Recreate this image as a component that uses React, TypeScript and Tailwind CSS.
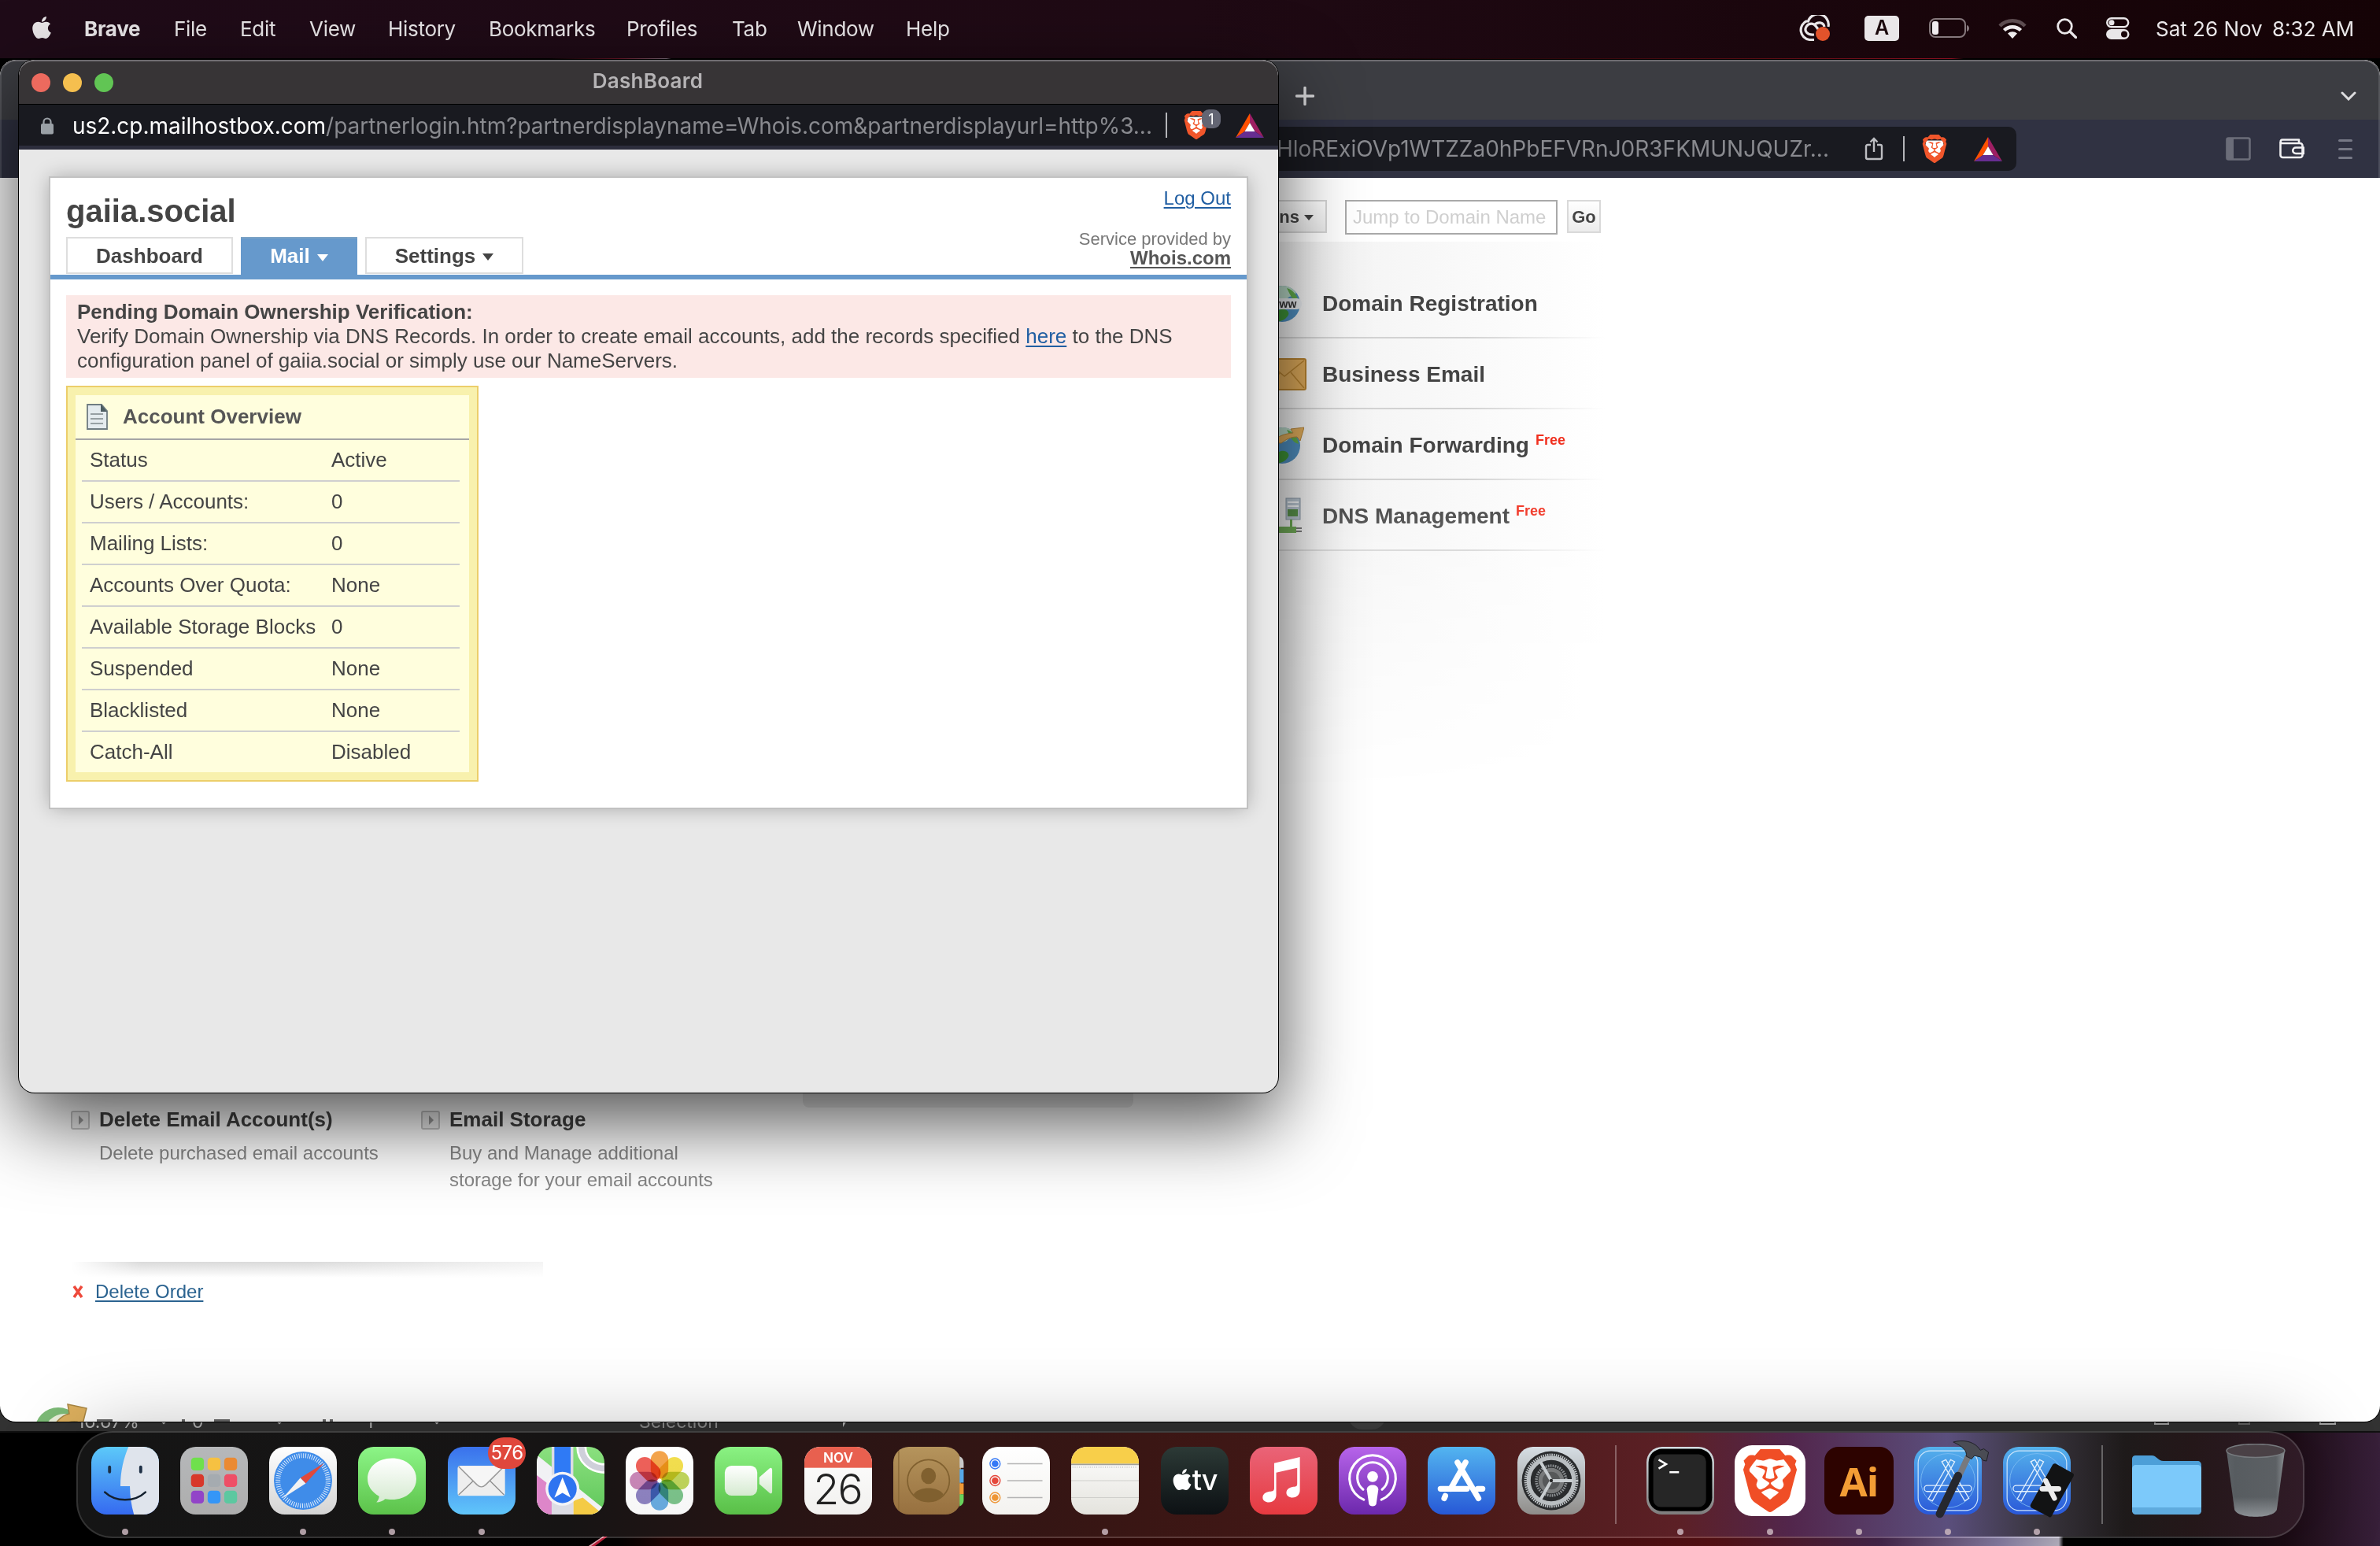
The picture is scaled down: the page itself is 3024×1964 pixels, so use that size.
import React from "react";
import { FaApple } from "react-icons/fa";
import { SiBrave } from "react-icons/si";

type Kids = { children?: React.ReactNode };

/* ---------- shared glyphs ---------- */

function BraveLion({ className }: { className: string }) {
  return (
    <span className={`relative flex shrink-0 items-center justify-center ${className}`}>
      <svg viewBox="0 0 24 24" className="absolute h-full w-full">
        <path d="M5 5h14l1 5-3 8-5 4-5-4-3-8z" fill="#fff" />
      </svg>
      <SiBrave className="relative h-full w-full text-[#f1562b]" />
    </span>
  );
}

function BatTriangle() {
  return (
    <svg viewBox="0 0 36 31" className="h-[31px] w-[36px] shrink-0">
      <path d="M18 0 0 31l11.500-8L18 12z" fill="#ff5000" />
      <path d="M18 0v12l6.500 11L36 31z" fill="#9e1f63" />
      <path d="M0 31h36l-11.500-8h-13z" fill="#662d91" />
      <path d="M18 12 11.500 23h13z" fill="#fff" />
    </svg>
  );
}

/* ---------- menu bar ---------- */

const menus = [
  { label: "File", w: "w-[84px]" },
  { label: "Edit", w: "w-[88px]" },
  { label: "View", w: "w-[100px]" },
  { label: "History", w: "w-[128px]" },
  { label: "Bookmarks", w: "w-[175px]" },
  { label: "Profiles", w: "w-[134px]" },
  { label: "Tab", w: "w-[83px]" },
  { label: "Window", w: "w-[138px]" },
  { label: "Help", w: "w-[60px]" },
];

function MenuBar() {
  return (
    <header className="flex h-[74px] w-full items-center bg-linear-to-r from-[#1f0b18] via-[#1f0a14] to-[#150306] pb-[2px] text-[26px] text-[#e9e6e8]">
      <FaApple className="ml-[39px] h-[32px] w-[28px] shrink-0 -translate-y-px" />
      <span className="ml-[40px] w-[114px] font-bold tracking-[-0.3px]">Brave</span>
      {menus.map((m) => (
        <span key={m.label} className={`${m.w} shrink-0 whitespace-nowrap tracking-[-0.3px]`}>
          {m.label}
        </span>
      ))}
      <div className="ml-auto flex items-center pr-[34px]">
        <svg viewBox="0 0 42 34" className="h-[34px] w-[42px]">
          <g fill="none" stroke="#e9e6e8" strokeWidth="3.200">
            <path d="M20 31.500H14A12.500 12.500 0 0 1 11 7.500 M12 9.500A12.500 12.500 0 0 1 38 15" />
            <path d="M20 25c-9 1-13-5-10-10s9-5 12-1l6 8" />
            <path d="M20 13c4-5 12-4 13 2" />
          </g>
          <circle cx="31" cy="24" r="9" fill="#e2532b" />
        </svg>
        <span className="ml-[42px] flex h-[32px] w-[44px] items-center justify-center rounded-[5px] bg-[#e9e6e8] text-[25px] font-semibold text-[#1a070b]">
          A
        </span>
        <svg viewBox="0 0 52 26" className="ml-[38px] h-[26px] w-[52px]">
          <rect x="1" y="1" width="45" height="23" rx="7" fill="none" stroke="#85787c" strokeWidth="2" />
          <rect x="4" y="4" width="8" height="17" rx="3" fill="#efecee" />
          <path d="M48 9c4 1 4 7 0 8z" fill="#85787c" />
        </svg>
        <svg viewBox="0 0 36 26" className="ml-[36px] h-[26px] w-[36px]">
          <g fill="none" strokeWidth="4.500">
            <path d="M2 10A22.500 22.500 0 0 1 34 10" stroke="#5c4c50" />
            <path d="M7.500 15.500a15 15 0 0 1 21 0" stroke="#efecee" />
          </g>
          <path d="M18 26l-6-6.500a9 9 0 0 1 12 0z" fill="#efecee" />
        </svg>
        <svg viewBox="0 0 26 26" className="ml-[38px] h-[26px] w-[26px]">
          <circle cx="10.500" cy="10.500" r="8.800" fill="none" stroke="#e9e6e8" strokeWidth="2.800" />
          <path d="M17 17l7.500 7.500" stroke="#e9e6e8" strokeWidth="3.200" strokeLinecap="round" />
        </svg>
        <svg viewBox="0 0 30 28" className="ml-[37px] h-[28px] w-[30px]">
          <rect x="1.200" y="1.200" width="27" height="11" rx="5.500" fill="none" stroke="#e9e6e8" strokeWidth="2.400" />
          <circle cx="7" cy="6.700" r="3.500" fill="#e9e6e8" />
          <rect x="0" y="15" width="29.500" height="13" rx="6.500" fill="#e9e6e8" />
          <circle cx="23" cy="21.500" r="4" fill="#1a070b" />
        </svg>
        <span className="ml-[33px] w-[148px] whitespace-nowrap">Sat 26 Nov</span>
        <span className="w-[103px] whitespace-nowrap">8:32 AM</span>
      </div>
    </header>
  );
}

/* ---------- main browser window ---------- */

function GlobeIcon({ arrow }: { arrow?: boolean }) {
  return (
    <svg viewBox="0 0 52 48" className="h-[48px] w-[52px]">
      <circle cx="24" cy="24" r="23" fill="#4f8fc0" />
      <path d="M6 10C16-2 34-2 42 10c-6 6-8 3-12 8-8 4-16 0-24-8z" fill="#b9d9c8" />
      <path d="M30 4c8 2 14 10 15 18-8-2-10-8-15-18z" fill="#62ad4c" />
      <path d="M20 32c8-4 14 2 12 6s-8 9-14 8-6-10 2-14z" fill="#3f9638" />
      {arrow ? (
        <path d="M10 20C20 11 28 9 38 8l-3-5 17-2-5 17-4-5c-8 0-14 3-20 8z" fill="#e0ad5c" stroke="#b78639" />
      ) : (
        <>
          <rect x="0" y="17" width="49" height="14" rx="6" fill="#e9ecef" />
          <text x="26" y="28.500" textAnchor="middle" fontSize="14" fontWeight="700" fill="#333">
            www
          </text>
        </>
      )}
    </svg>
  );
}

function EnvelopeIcon() {
  return (
    <svg viewBox="0 0 56 42" className="h-[42px] w-[56px]">
      <rect x="1" y="1" width="53" height="39" rx="2" fill="#dca95a" stroke="#b5812f" strokeWidth="2" />
      <path d="M3 3l24 20L52 3M3 38l18-19M52 38L35 18" fill="none" stroke="#b5812f" strokeWidth="1.500" />
    </svg>
  );
}

function ServerIcon() {
  return (
    <svg viewBox="0 0 50 48" className="h-[48px] w-[50px]">
      <rect x="29" y="1" width="18" height="27" fill="#b7c4d0" stroke="#8595a3" />
      <path d="M31 6h14M31 11h14" stroke="#f3f6f8" strokeWidth="2" />
      <rect x="31" y="15" width="13" height="9" fill="#4d8b3e" />
      <path d="M34 28v9H20v8h22v-8h-5v-9z" fill="#5da23f" />
      <path d="M42 39h7M42 43h7" stroke="#666" strokeWidth="2" />
    </svg>
  );
}

const services = [
  { label: "Domain Registration", free: false, icon: <GlobeIcon /> },
  { label: "Business Email", free: false, icon: <EnvelopeIcon /> },
  { label: "Domain Forwarding", free: true, icon: <GlobeIcon arrow /> },
  { label: "DNS Management", free: true, icon: <ServerIcon /> },
];

function BulletBox() {
  return (
    <svg viewBox="0 0 24 24" className="mt-[5px] h-[24px] w-[24px] shrink-0">
      <rect x="1" y="1" width="22" height="22" rx="2" fill="#eee" stroke="#c4c4c4" strokeWidth="2" />
      <path d="M10 6l6 6-6 6z" fill="#999" />
    </svg>
  );
}

function Feature({ title, lines }: { title: string; lines: string[] }) {
  return (
    <div className="flex h-[110px] w-[445px] gap-[12px]">
      <BulletBox />
      <div className="whitespace-nowrap">
        <h3 className="text-[26px] leading-[32px] font-bold text-[#404040]">{title}</h3>
        <div className="mt-[10px] text-[24px] leading-[34px] text-[#868686]">
          {lines.map((l) => (
            <p key={l}>{l}</p>
          ))}
        </div>
      </div>
    </div>
  );
}

function BrowserWindow() {
  return (
    <section className="absolute top-[76px] left-0 flex h-[1730px] w-[3024px] flex-col overflow-hidden rounded-[20px] bg-white shadow-[0_0_0_1px_#000]">
      <div className="flex h-[76px] shrink-0 items-center justify-between rounded-t-[20px] border-x-2 border-t-2 border-x-[#55565b] border-t-[#6d6b70] bg-[#3c3d42] pr-[28px] pl-[1644px]">
        <svg viewBox="0 0 24 24" className="h-[24px] w-[24px] translate-y-[7px]">
          <path d="M12 1.500v21M1.500 12h21" stroke="#d6d6d8" strokeWidth="3.400" strokeLinecap="round" />
        </svg>
        <svg viewBox="0 0 20 12" className="h-[12px] w-[20px] translate-y-[7px]">
          <path d="M2 2l8 8 8-8" fill="none" stroke="#dcdcde" strokeWidth="3" strokeLinecap="round" />
        </svg>
      </div>
      <div className="flex h-[74px] shrink-0 items-center border-x-2 border-[#4c4e5c] bg-[#303242]">
        <div className="ml-[198px] flex h-[56px] w-[2362px] items-center justify-end rounded-[10px] bg-[#191a20] pr-[18px]">
          <span className="mr-[45px] text-[28px] whitespace-nowrap text-[#898a8f]">
            HloRExiOVp1WTZZa0hPbEFVRnJ0R3FKMUNJQUZr...
          </span>
          <svg viewBox="0 0 24 30" className="h-[30px] w-[24px]">
            <path d="M8 10H4a2 2 0 0 0-2 2v14a2 2 0 0 0 2 2h16a2 2 0 0 0 2-2V12a2 2 0 0 0-2-2h-4M12 19V2M7.500 6.500 12 2l4.500 4.500" fill="none" stroke="#bdbec2" strokeWidth="2.400" />
          </svg>
          <span className="mr-[20px] ml-[25px] h-[32px] w-[2px] bg-[#b4b5b9]" />
          <BraveLion className="h-[36px] w-[36px]" />
          <span className="w-[32px]" />
          <BatTriangle />
        </div>
        <div className="ml-auto flex items-center pr-[33px]">
          <svg viewBox="0 0 32 30" className="h-[30px] w-[32px]">
            <rect x="1.500" y="1.500" width="29" height="27" rx="2" fill="none" stroke="#6b6d79" strokeWidth="2.600" />
            <rect x="1" y="2" width="9" height="27" fill="#6b6d79" />
          </svg>
          <svg viewBox="0 0 32 26" className="ml-[36px] h-[26px] w-[32px]">
            <g fill="none" stroke="#f0f0f2" strokeWidth="2.600" strokeLinejoin="round">
              <path d="M1.500 4v17a3 3 0 0 0 3 3h22a3 3 0 0 0 3-3V9a3 3 0 0 0-3-3H4a2.200 2.200 0 0 1 0-4.500h21V6" />
              <path d="M31 11.500H21a3.500 3.500 0 0 0 0 7.500h10z" />
            </g>
          </svg>
          <div className="ml-[43px] flex w-[18px] flex-col gap-[8px]">
            <span className="h-[3px] rounded bg-[#777986]" />
            <span className="h-[3px] rounded bg-[#777986]" />
            <span className="h-[3px] rounded bg-[#777986]" />
          </div>
        </div>
      </div>
      <div className="flex flex-1 overflow-hidden font-[Liberation_Sans,Arial,sans-serif]">
        <div className="w-[1600px] shrink-0 pt-[1180px] pl-[90px]">
          <div className="flex">
            <Feature title="Delete Email Account(s)" lines={["Delete purchased email accounts"]} />
            <Feature title="Email Storage" lines={["Buy and Manage additional", "storage for your email accounts"]} />
            <div className="-mt-[80px] ml-[40px] h-[81px] w-[420px] rounded-b-[8px] bg-[#ececec]" />
          </div>
          <div className="mt-[87px] h-[20px] w-[600px] bg-linear-to-b from-[#dadada] to-white mask-l-from-85%">
            <div className="h-full w-full bg-linear-to-r from-white/0 from-50% to-white/70" />
          </div>
          <div className="mt-[4px] flex items-center text-[24px] leading-[28px]">
            <svg viewBox="0 0 14 16" className="mr-[15px] ml-[2px] h-[16px] w-[14px]">
              <path d="M2 1l10 14M12 1 2 15" stroke="#ee4a3c" strokeWidth="3.600" />
            </svg>
            <a className="text-[#2b6390] underline decoration-2 underline-offset-[3px]">Delete Order</a>
          </div>
          <div className="mt-[127px] -ml-[48px] flex">
            <svg viewBox="0 0 70 60" className="h-[60px] w-[70px] shrink-0">
              <circle cx="32" cy="36" r="30" fill="#7cba76" />
              <circle cx="40" cy="40" r="26" fill="#e9efdb" />
              <path d="M22 40C26 26 36 16 46 14l-2-12 24 5-6 24-6-7c-14-2-24 8-28 20z" fill="#ddb05e" stroke="#a98642" strokeWidth="1.500" />
            </svg>
            <div className="mt-[21px] ml-[11px] flex h-[3px] opacity-80">
              <span className="h-[3px] w-[20px] bg-[#444]" />
              <span className="ml-[88px] h-[3px] w-[4px] bg-[#444]" />
              <span className="ml-[37px] h-[3px] w-[20px] bg-[#444]" />
              <span className="ml-[118px] h-[3px] w-[4px] bg-[#444]" />
              <span className="ml-[5px] h-[3px] w-[4px] bg-[#444]" />
            </div>
          </div>
        </div>
        <div className="w-[440px] pt-[28px]">
          <div className="flex h-[44px] items-start">
            <div className="flex h-[42px] w-[86px] shrink-0 items-center justify-end border-2 border-[#d4d4d4] bg-linear-to-b from-white to-[#ececec] pt-px pr-[15px] text-[22px] font-bold text-[#444]">
              ons
              <svg viewBox="0 0 12 7" className="ml-[6px] h-[7px] w-[12px] translate-y-px">
                <path d="M0 0h12L6 7z" fill="#444" />
              </svg>
            </div>
            <div className="ml-[23px] flex h-[44px] w-[270px] shrink-0 items-center border-2 border-[#a9a9a9] bg-white pl-[8px] text-[24px] whitespace-nowrap text-[#cfcfcf]">
              Jump to Domain Name
            </div>
            <div className="ml-[12px] flex h-[42px] w-[43px] shrink-0 items-center justify-center border-2 border-[#d9d9d9] bg-linear-to-b from-white to-[#ececec] pt-px text-[22px] font-bold text-[#444]">
              Go
            </div>
          </div>
          <div className="mt-[9px] h-[703px] bg-linear-to-r from-[#f1f1f1] to-white pt-[33px] mask-b-from-45%">
            {services.map((s) => (
              <div key={s.label} className="relative flex h-[90px] items-center pt-[2px] pl-[5px]">
                <div className="flex w-[75px] shrink-0">{s.icon}</div>
                <span className="text-[28px] font-bold whitespace-nowrap text-[#444]">{s.label}</span>
                {s.free && (
                  <span className="mb-[13px] ml-[8px] text-[18px] font-bold text-[#f0301f]">Free</span>
                )}
                <div className="absolute bottom-0 left-0 h-[2px] w-full bg-linear-to-r from-[#d2d2d2] from-60% to-white" />
              </div>
            ))}
          </div>
        </div>
      </div>
    </section>
  );
}

/* ---------- popup window ---------- */

const overview = [
  ["Status", "Active"],
  ["Users / Accounts:", "0"],
  ["Mailing Lists:", "0"],
  ["Accounts Over Quota:", "None"],
  ["Available Storage Blocks", "0"],
  ["Suspended", "None"],
  ["Blacklisted", "None"],
  ["Catch-All", "Disabled"],
];

function Caret({ className }: { className: string }) {
  return (
    <svg viewBox="0 0 14 9" className={`mt-[3px] ml-[9px] h-[9px] w-[14px] ${className}`}>
      <path d="M0 0h14L7 9z" fill="currentColor" />
    </svg>
  );
}

function PopupWindow() {
  return (
    <section className="absolute top-[76px] left-[24px] flex h-[1312px] w-[1600px] flex-col overflow-hidden rounded-[20px] bg-[#e8e8e8] shadow-[0_0_0_1px_#000,0_36px_100px_rgba(0,0,0,0.7)]">
      <div className="relative flex h-[57px] shrink-0 items-center justify-center rounded-t-[20px] border-t-2 border-b border-t-[#6f6c70] border-b-black bg-[#373436]">
        <div className="absolute left-[16px] flex gap-[16px]">
          <span className="h-[24px] w-[24px] rounded-full bg-[#ed6a5e]" />
          <span className="h-[24px] w-[24px] rounded-full bg-[#f5bf4f]" />
          <span className="h-[24px] w-[24px] rounded-full bg-[#61c554]" />
        </div>
        <span className="pr-[2px] pb-[5px] text-[26px] font-semibold tracking-[0.25px] text-[#b5b3b5]">DashBoard</span>
      </div>
      <div className="flex h-[57px] shrink-0 items-center border-b-[5px] border-[#2c2d3c] bg-[#191a20] pl-[28px]">
        <svg viewBox="0 0 16 22" className="h-[22px] w-[16px] shrink-0 translate-y-px">
          <path d="M3.500 9V6a4.500 4.500 0 0 1 9 0v3" fill="none" stroke="#9aa0a6" strokeWidth="2.200" />
          <rect x="0" y="8" width="16" height="13.500" rx="2" fill="#9aa0a6" />
        </svg>
        <span className="ml-[24px] pt-[2px] text-[28px] tracking-[-0.03px] whitespace-nowrap text-[#898a8f]">
          <span className="text-white">us2.cp.mailhostbox.com</span>
          /partnerlogin.htm?partnerdisplayname=Whois.com&amp;partnerdisplayurl=http%3...
        </span>
        <div className="ml-auto flex items-center pr-[18px]">
          <span className="mr-[19px] h-[32px] w-[2px] bg-[#b4b5b9]" />
          <div className="relative mr-[32px]">
            <BraveLion className="h-[36px] w-[36px]" />
            <span className="absolute -top-[2px] left-[25px] flex h-[24px] w-[24px] items-center justify-center rounded-[9px] bg-[#636573] text-[18px] text-white">
              1
            </span>
          </div>
          <BatTriangle />
        </div>
      </div>
      <div className="px-[40px] pt-[36px] font-[Liberation_Sans,Arial,sans-serif] text-[26px] text-[#444]">
        <div className="h-[800px] bg-white shadow-[0_0_0_2px_#c2c2c2,0_0_24px_rgba(0,0,0,0.3)]">
          <div className="flex h-[129px] justify-between border-b-[6px] border-[#6699cc] pr-[20px] pl-[20px]">
            <div className="pt-[18px]">
              <h1 className="text-[40px] leading-[48px] font-bold">gaiia.social</h1>
              <nav className="mt-[9px] flex h-[48px] gap-[10px] font-bold">
                <span className="flex h-[47px] w-[212px] items-center justify-center border-2 border-[#dedede] pt-[1px]">
                  Dashboard
                </span>
                <span className="flex h-[48px] w-[148px] items-center justify-center border-t-2 border-[#7ba3c6] bg-[#6699cc] pb-px text-white">
                  Mail
                  <Caret className="text-white" />
                </span>
                <span className="flex h-[47px] w-[201px] items-center justify-center border-2 border-[#dedede] pt-[1px]">
                  Settings
                  <Caret className="text-[#444]" />
                </span>
              </nav>
            </div>
            <div className="pt-[12px] text-right">
              <a className="block text-[24px] leading-[28px] text-[#205ea2] underline decoration-2 underline-offset-[3px]">
                Log Out
              </a>
              <p className="mt-[26px] text-[22px] leading-[23px] text-[#777]">Service provided by</p>
              <a className="mt-px block text-[24px] leading-[24px] font-bold text-[#555] underline decoration-2 underline-offset-[3px]">
                Whois.com
              </a>
            </div>
          </div>
          <div className="mx-[20px] mt-[20px] h-[105px] bg-[#fce8e6] pt-[6px] pl-[14px] leading-[31px] whitespace-nowrap">
            <p className="font-bold">Pending Domain Ownership Verification:</p>
            <p>
              Verify Domain Ownership via DNS Records. In order to create email accounts, add the records specified{" "}
              <a className="text-[#205ea2] underline decoration-2 underline-offset-[3px]">here</a> to the DNS
            </p>
            <p>configuration panel of gaiia.social or simply use our NameServers.</p>
          </div>
          <div className="mt-[10px] ml-[20px] w-[524px] border-2 border-[#ecce6a] bg-[#f8f1ad] p-[10px]">
            <div className="bg-[#fffedd]">
              <div className="flex h-[57px] items-center border-b-2 border-[#a5a5a5] pl-[14px] font-bold text-[#555]">
                <svg viewBox="0 0 27 33" className="mr-[19px] h-[33px] w-[27px]">
                  <path d="M1 1h18l7 8v23H1z" fill="#e4ebee" stroke="#6f7c81" strokeWidth="1.800" />
                  <path d="M18 0l8 10h-8z" fill="#4d5d62" />
                  <path d="M5 13h16M5 19h16M5 25h16" stroke="#97a0a3" strokeWidth="2" />
                </svg>
                Account Overview
              </div>
              <div className="pr-[12px] pl-[8px]">
                {overview.map(([k, v], i) => (
                  <div
                    key={k}
                    className={
                      i < overview.length - 1
                        ? "flex h-[53px] items-center border-b-2 border-[#cfcfcf] pl-[10px]"
                        : "flex h-[51px] items-center pl-[10px]"
                    }
                  >
                    <span className="w-[307px] whitespace-nowrap">{k}</span>
                    <span>{v}</span>
                  </div>
                ))}
              </div>
            </div>
          </div>
        </div>
      </div>
    </section>
  );
}

/* ---------- dock ---------- */

function Tile({ id, from, to, children }: Kids & { id: string; from: string; to: string }) {
  return (
    <svg viewBox="0 0 100 100" className="h-[86px] w-[86px] overflow-visible">
      <defs>
        <linearGradient id={`${id}-bg`} x1="0" y1="0" x2="0" y2="1">
          <stop offset="0" stopColor={from} />
          <stop offset="1" stopColor={to} />
        </linearGradient>
        <linearGradient id={`${id}-white`} x1="0" y1="0" x2="0" y2="1">
          <stop offset="0" stopColor="#ffffff" />
          <stop offset="1" stopColor="#d5ead0" />
        </linearGradient>
        <clipPath id={`${id}-clip`}>
          <rect width="100" height="100" rx="23" />
        </clipPath>
      </defs>
      <rect width="100" height="100" rx="23" fill={`url(#${id}-bg)`} />
      {children}
    </svg>
  );
}

function Finder() {
  return (
    <Tile id="finder" from="#5cc9f9" to="#356af0">
      <path clipPath="url(#finder-clip)" d="M55 0C48 16 43 36 43 58h14c0 14 2 28 6 42h40V0z" fill="#dfe4ec" />
      <path d="M27 30v7M73 30v7" stroke="#1d2f45" strokeWidth="4.500" strokeLinecap="round" />
      <path d="M20 67c16 15 44 15 60 0" fill="none" stroke="#14202e" strokeWidth="3" strokeLinecap="round" />
    </Tile>
  );
}

const padColors = ["#6fe04c", "#f6c142", "#ea8a33", "#d8382b", "#a5abb0", "#ee4f66", "#9244c8", "#3596f7", "#5cc8a0"];

function Launchpad() {
  return (
    <Tile id="pad" from="#b6b8ba" to="#adadad">
      {padColors.map((c, i) => (
        <rect key={c} x={16 + (i % 3) * 24.5} y={16 + Math.floor(i / 3) * 24.4} width="19" height="19" rx="5" fill={c} />
      ))}
    </Tile>
  );
}

function Safari() {
  return (
    <Tile id="safari" from="#ffffff" to="#d4d4d4">
      <circle cx="50" cy="50" r="43" fill="#3f8ce9" />
      <circle cx="50" cy="50" r="37" fill="none" stroke="#e6f1fd" strokeWidth="7" strokeDasharray="1.100 2.129" />
      <path d="M81 24 46 46l8 8z" fill="#e0493c" />
      <path d="M20 76 46 46l8 8z" fill="#f2f2f2" />
    </Tile>
  );
}

function Messages() {
  return (
    <Tile id="msg" from="#8cf587" to="#5cc24a">
      <path d="M50 17c21 0 36 13 36 30.500S71 78 50 78c-4 0-7-.5-10-1-3 3-8 5-13 5 3-3 4-6 4-9-11-6-17-15-17-25.500C14 30 29 17 50 17z" fill="url(#msg-white)" />
    </Tile>
  );
}

function Mail() {
  return (
    <Tile id="mail" from="#3a71ec" to="#60c6fa">
      <rect x="14.500" y="28" width="70" height="44.500" rx="4" fill="#eeeeee" />
      <path d="M16 71l24-23M83 71L60 48" stroke="#8d8d8d" strokeWidth="1.500" />
      <path d="M16 29l27 27c4 4 9 4 13 0l27-27" fill="#f6f6f6" stroke="#9a9a9a" strokeWidth="1.800" />
    </Tile>
  );
}

function Maps() {
  return (
    <Tile id="maps" from="#8be07f" to="#5fc75a">
      <g clipPath="url(#maps-clip)">
        <path d="M0 12l100 80v20H0z" fill="#f1f1f4" />
        <path d="M0 42l26 20v40H0z" fill="#dd86c9" />
        <path d="M54 80l14-5 30 25H54z" fill="#f4cb45" />
        <rect x="22" y="0" width="32" height="100" fill="#dcdce4" />
        <path d="M66 0c0 18 14 32 36 32" fill="none" stroke="#fff" strokeWidth="15" />
        <path d="M66 0c0 18 14 32 36 32" fill="none" stroke="#cfd0da" strokeWidth="9" />
        <rect x="26" y="0" width="24" height="60" fill="#2f7af5" />
      </g>
      <circle cx="38" cy="62" r="25" fill="#f3f3f7" />
      <circle cx="38" cy="62" r="21" fill="#2f74f0" />
      <path d="M38 45l12 30-12-7-12 7z" fill="#fff" />
    </Tile>
  );
}

const petals = ["#f39b38", "#f2dc3a", "#b9d24a", "#6fbf80", "#5aa5e0", "#8377bd", "#c47bb0", "#ee5048"];

function Photos() {
  return (
    <Tile id="photos" from="#ffffff" to="#f6f6f6">
      {petals.map((c, i) => (
        <rect
          key={c}
          x="37"
          y="6"
          width="26"
          height="41"
          rx="13"
          fill={c}
          opacity="0.9"
          className="mix-blend-multiply"
          transform={`rotate(${i * 45} 50 50)`}
        />
      ))}
    </Tile>
  );
}

function FaceTime() {
  return (
    <Tile id="ft" from="#8af283" to="#59bf47">
      <rect x="15" y="28" width="48" height="44" rx="10" fill="url(#ft-white)" />
      <path d="M66 45l15-13c2-2 4-1 4 2v32c0 3-2 4-4 2L66 55z" fill="url(#ft-white)" />
    </Tile>
  );
}

function Calendar() {
  return (
    <Tile id="cal" from="#ffffff" to="#f1f0ee">
      <rect clipPath="url(#cal-clip)" width="100" height="31" fill="#e8604f" />
      <text x="50" y="23.500" textAnchor="middle" fontSize="20" fontWeight="600" fill="#fff">
        NOV
      </text>
      <text x="49" y="84.500" textAnchor="middle" fontSize="62" fontWeight="300" letterSpacing="-2" fill="#222">
        26
      </text>
    </Tile>
  );
}

function Contacts() {
  return (
    <Tile id="con" from="#b5945c" to="#97703f">
      <path d="M98 14c4 2 6 5 6 10v7h-6z" fill="#c9c9c9" />
      <path d="M98 33h6v20h-6z" fill="#56a8e8" />
      <path d="M98 54h6v16h-6z" fill="#ef9a36" />
      <path d="M98 70h6v9c0 4-2 7-6 9z" fill="#68d35c" />
      <path d="M8 6v88" stroke="#8a6838" strokeWidth="1.500" />
      <circle cx="52" cy="50" r="31" fill="none" stroke="#80602f" strokeWidth="2" />
      <ellipse cx="52" cy="43" rx="11" ry="12" fill="#80602f" />
      <path d="M30 70c8-12 36-12 44 0-10 15-34 15-44 0z" fill="#80602f" />
    </Tile>
  );
}

function Reminders() {
  return (
    <Tile id="rem" from="#ffffff" to="#f3f2ef">
      {["#3478f6", "#e5473b", "#ee9636"].map((c, i) => (
        <g key={c}>
          <circle cx="19" cy={25 + i * 25} r="7.500" fill="none" stroke={c} strokeWidth="1.600" />
          <circle cx="19" cy={25 + i * 25} r="5" fill={c} />
          <path d={`M37 ${25 + i * 25}h52`} stroke="#b4b4b4" strokeWidth="1.600" />
        </g>
      ))}
    </Tile>
  );
}

function Notes() {
  return (
    <Tile id="notes" from="#ffffff" to="#e4e3dd">
      <rect clipPath="url(#notes-clip)" width="100" height="25" fill="#f8cf4a" />
      <path d="M0 26h100" stroke="#a09f9a" strokeWidth="2" />
      <path d="M2 30h96" stroke="#b5b5b5" strokeWidth="1.500" strokeDasharray="1.200 2" />
      <path d="M0 50h100M0 75h100" stroke="#cfcfcb" strokeWidth="1.300" />
    </Tile>
  );
}

function AppleTv() {
  return (
    <div className="flex h-[86px] w-[86px] items-center justify-center rounded-[20px] bg-linear-to-b from-[#2c3a36] to-[#0d1114] text-white">
      <FaApple className="h-[31px] w-[26px] -translate-y-[2px]" />
      <span className="text-[36px] leading-none font-medium tracking-[-1px] -translate-y-px">tv</span>
    </div>
  );
}

function Music() {
  return (
    <Tile id="music" from="#ea6478" to="#e63a40">
      <path d="M36 24l38-9v49c0 6-4 11-11 11-5 0-9-3-9-7 0-5 4-8 10-9 5 0 6-1 6-5V31l-31 7v33c0 6-4 11-11 11-5 0-9-3-9-7 0-5 4-8 10-9 5 0 7-1 7-5z" fill="#fff" />
    </Tile>
  );
}

function Podcasts() {
  return (
    <Tile id="pod" from="#b764ea" to="#6c28ac">
      <g fill="none" stroke="#fff" strokeWidth="3.600" strokeLinecap="round">
        <path d="M37 78a34 34 0 1 1 26 0" />
        <path d="M36 63a22.500 22.500 0 1 1 28 0" />
      </g>
      <circle cx="50" cy="44" r="8" fill="#fff" />
      <path d="M41.500 63c0-9 17-9 17 0l-3 21c-1 5-10 5-11 0z" fill="#fff" />
    </Tile>
  );
}

function AppStore() {
  return (
    <Tile id="store" from="#53b5f0" to="#2758d6">
      <g stroke="#fff" strokeWidth="8.500" strokeLinecap="round">
        <path d="M56 23 34 62M26 72.500 24.500 76" />
        <path d="M44 23 75 76" />
        <path d="M19 62h39M74 62h7" />
      </g>
    </Tile>
  );
}

function Settings() {
  return (
    <Tile id="set" from="#d6dee4" to="#8f8d8a">
      <circle cx="50" cy="50" r="43.500" fill="#2a2c2e" />
      <circle cx="50" cy="50" r="38" fill="none" stroke="#c3c8cb" strokeWidth="4" strokeDasharray="1.800 1.400" />
      <circle cx="50" cy="50" r="33.500" fill="none" stroke="#b9bec1" strokeWidth="6" />
      <circle cx="50" cy="50" r="22" fill="none" stroke="#8d9194" strokeWidth="4" strokeDasharray="2 1.500" />
      <circle cx="50" cy="50" r="19" fill="#77797a" />
      <circle cx="50" cy="50" r="13" fill="#565859" />
      <path d="M50 50h32M50 50 34 22M50 50 34 78" stroke="#c8cdd0" strokeWidth="4.500" />
      <circle cx="50" cy="50" r="2.500" fill="#222" />
    </Tile>
  );
}

function Terminal() {
  return (
    <Tile id="term" from="#d5dfe3" to="#7e7c7c">
      <rect x="3" y="3" width="94" height="92" rx="20" fill="#000" />
      <rect x="10" y="11" width="78" height="78" rx="11" fill="#262626" />
      <path d="M18 19l11 6.500L18 32" fill="none" stroke="#fff" strokeWidth="3" />
      <path d="M34 37.500h14" stroke="#fff" strokeWidth="3" />
    </Tile>
  );
}

function BraveApp() {
  return (
    <div className="flex h-[90px] w-[90px] items-center justify-center rounded-[22px] bg-white">
      <SiBrave className="h-[80px] w-[80px] text-[#f04e26]" />
    </div>
  );
}

function Illustrator() {
  return (
    <div className="flex h-[86px] w-[88px] items-center justify-center rounded-[18px] bg-[#2d0300] font-[Open_Sans,sans-serif] text-[51px] leading-none font-bold tracking-[-1px] text-[#f39d35]">
      Ai
    </div>
  );
}

function Blueprint() {
  return (
    <>
      <rect x="6" y="6" width="88" height="88" rx="18" fill="none" stroke="#cfe6fb" strokeWidth="1.400" />
      <circle cx="50" cy="50" r="40" fill="none" stroke="#7dbdf3" strokeWidth="1" />
      <g fill="none" stroke="#e2f0fd" strokeWidth="1.500">
        <path d="M54 19l6 3-33 58-6-3zM41 22l6-3 34 57-6 4z" />
        <rect x="15" y="57" width="70" height="9" rx="4.500" />
      </g>
    </>
  );
}

function Xcode() {
  return (
    <Tile id="xcode" from="#55b2ec" to="#2a58d8">
      <Blueprint />
      <path d="M80 14 66 44" stroke="#77797f" strokeWidth="9" />
      <path d="M65 43 38 99" stroke="#26282f" strokeWidth="12" strokeLinecap="round" />
      <path d="M58-7c14-4 28-1 36 7l4 5 5-2 7 5-3 13-5-1-4-5-9-2-4 5-8-4c2-8-6-15-19-21z" fill="#4a4c54" stroke="#191a1e" />
    </Tile>
  );
}

function Simulator() {
  return (
    <Tile id="sim" from="#55b2ec" to="#2a58d8">
      <Blueprint />
      <path d="M78 25l25 14c2 1 2 3 1 5L72 102c-1 2-3 3-5 1L42 90c-2-1-2-3-1-5l32-58c1-2 3-3 5-2z" fill="#121314" />
      <path d="M63 50 76 76" stroke="#ececec" strokeWidth="7.500" strokeLinecap="round" />
      <path d="M58 62h24" stroke="#ececec" strokeWidth="8" strokeLinecap="round" />
    </Tile>
  );
}

function Folder() {
  return (
    <svg viewBox="0 0 88 76" className="h-[76px] w-[88px] translate-y-[5px]">
      <path d="M0 6c0-4 2-5 5-5h20c6 0 8 7 15 7h43c3 0 5 2 5 5v58H0z" fill="#4d9fd8" />
      <path d="M0 18c0-3 2-5 5-5h78c3 0 5 2 5 5v52c0 3-2 5-5 5H5c-3 0-5-2-5-5z" fill="#7cc9fa" />
      <path d="M0 67h88v4c0 3-2 5-5 5H5c-3 0-5-2-5-5z" fill="#5fabde" />
    </svg>
  );
}

function Trash() {
  return (
    <svg viewBox="0 0 76 94" className="h-[94px] w-[76px]">
      <defs>
        <linearGradient id="bin" x1="0" x2="1">
          <stop offset="0" stopColor="#5d6266" />
          <stop offset="0.150" stopColor="#575c60" />
          <stop offset="0.850" stopColor="#5c6064" />
          <stop offset="1" stopColor="#8a8e92" />
        </linearGradient>
        <linearGradient id="bin-glow" x1="0" x2="0" y1="0" y2="1">
          <stop offset="0.700" stopColor="#999ea2" stopOpacity="0" />
          <stop offset="1" stopColor="#999ea2" stopOpacity="0.800" />
        </linearGradient>
      </defs>
      <path d="M1 9l10 74c2 13 52 13 54 0L75 9z" fill="url(#bin)" />
      <path d="M1 9l10 74c2 13 52 13 54 0L75 9z" fill="url(#bin-glow)" />
      <ellipse cx="38" cy="9" rx="37" ry="8.500" fill="#4a4146" stroke="#777b7f" strokeWidth="1.500" />
    </svg>
  );
}

function DockItem({ children, running, badge }: Kids & { running?: boolean; badge?: string }) {
  return (
    <div className="relative flex h-full w-[113.250px] shrink-0 flex-col items-center">
      <div className="mt-[14px] flex h-[94px] items-center justify-center">{children}</div>
      {running && <span className="mt-[14px] h-[8px] w-[8px] rounded-full bg-[#c9b5bd]/85" />}
      {badge && (
        <span className="absolute top-[6px] left-[65px] flex h-[40px] w-[48px] items-center justify-center rounded-full bg-[#e0473c] text-[24px] tracking-[-0.500px] text-white">
          {badge}
        </span>
      )}
    </div>
  );
}

function DockDivider() {
  return (
    <div className="flex w-[51.500px] shrink-0 justify-center pt-[16px]">
      <span className="h-[100px] w-[2px] bg-white/30" />
    </div>
  );
}

function Dock() {
  return (
    <nav className="absolute top-[1818px] left-[97px] flex h-[136px] w-[2831px] rounded-[46px] border-2 border-white/20 bg-[linear-gradient(90deg,#151515_0%,#161414_22%,#281414_32%,#3a1614_48%,#4a1a18_62%,#5c2026_72%,#52264c_77%,#5b4f7d_84%,#3a3640_88%,#1e1a1a_92%,#241719_95%,#301b27_100%)] bg-clip-padding pl-[3px] shadow-[0_0_100px_rgba(0,0,0,0.28)]">
      <DockItem running><Finder /></DockItem>
      <DockItem><Launchpad /></DockItem>
      <DockItem running><Safari /></DockItem>
      <DockItem running><Messages /></DockItem>
      <DockItem running badge="576"><Mail /></DockItem>
      <DockItem><Maps /></DockItem>
      <DockItem><Photos /></DockItem>
      <DockItem><FaceTime /></DockItem>
      <DockItem><Calendar /></DockItem>
      <DockItem><Contacts /></DockItem>
      <DockItem><Reminders /></DockItem>
      <DockItem running><Notes /></DockItem>
      <DockItem><AppleTv /></DockItem>
      <DockItem><Music /></DockItem>
      <DockItem><Podcasts /></DockItem>
      <DockItem><AppStore /></DockItem>
      <DockItem><Settings /></DockItem>
      <DockDivider />
      <DockItem running><Terminal /></DockItem>
      <DockItem running><BraveApp /></DockItem>
      <DockItem running><Illustrator /></DockItem>
      <DockItem running><Xcode /></DockItem>
      <DockItem running><Simulator /></DockItem>
      <DockDivider />
      <DockItem><Folder /></DockItem>
      <DockItem><Trash /></DockItem>
    </nav>
  );
}

/* ---------- window behind the browser ---------- */

function StripChevron({ className }: { className: string }) {
  return (
    <svg viewBox="0 0 12 8" className={`mb-[8px] h-[8px] w-[12px] ${className}`}>
      <path d="M1 1l5 5 5-5" fill="none" stroke="#b5b5b5" strokeWidth="2.200" />
    </svg>
  );
}

function StatusStrip() {
  return (
    <div className="absolute top-[1780px] left-0 flex h-[40px] w-[3024px] items-end border-b-2 border-[#111] bg-[#323232] text-[23px] leading-[24px] text-[#b5b5b5]">
      <span className="ml-[98px] w-[104px]">16.67%</span>
      <StripChevron className="mr-[30px]" />
      <span className="w-[105px]">0</span>
      <StripChevron className="mr-[104px]" />
      <span className="w-[84px]">1</span>
      <StripChevron className="mr-[251px]" />
      <span className="text-[#8d8d8d]">Selection</span>
      <svg viewBox="0 0 8 14" className="mb-[4px] ml-[158px] h-[14px] w-[8px]">
        <path d="M0 0h8L0 13z" fill="#b5b5b5" />
      </svg>
      <span className="mb-[2px] ml-[634px] h-[36px] w-[48px] rounded-full bg-[#414141]" />
      <div className="mb-[8px] ml-auto flex items-end gap-[88px] pr-[56px]">
        <span className="h-[10px] w-[19px] border-2 border-t-0 border-[#a5a5a5]" />
        <span className="h-[10px] w-[15px] border-2 border-t-0 border-[#636363]" />
        <span className="h-[10px] w-[21px] border-2 border-t-0 border-[#a5a5a5]" />
      </div>
    </div>
  );
}

export default function App() {
  return (
    <div className="relative h-[1964px] w-[3024px] overflow-hidden bg-black font-[Inter,sans-serif]">
      <MenuBar />
      <div className="h-[2px] w-full bg-[linear-gradient(90deg,#000_0%,#000_23%,#6b1526_26%,#7a6a78_28%,#000_28.200%,#000_55%,#5a0c12_74%,#8a1020_82%,#000_82.500%)]" />
      <div className="absolute top-[1820px] left-0 h-[144px] w-full bg-[linear-gradient(90deg,#000_0%,#040202_26%,#220302_28%,#3a0c0a_55%,#5d1216_72%,#4a2850_79%,#9086ae_84%,#c4c0d0_86.500%,#000_86.700%,#050305_92%,#1c0b14_96%,#38203a_100%)]" />
      <svg viewBox="0 0 24 12" className="absolute top-[1952px] left-[748px] h-[12px] w-[24px]">
        <path d="M0 12 18 0h6L8 12z" fill="#d02440" />
        <path d="M0 12 18 0h2L3 12z" fill="#f2c4cc" />
      </svg>
      <StatusStrip />
      <BrowserWindow />
      <PopupWindow />
      <Dock />
    </div>
  );
}
